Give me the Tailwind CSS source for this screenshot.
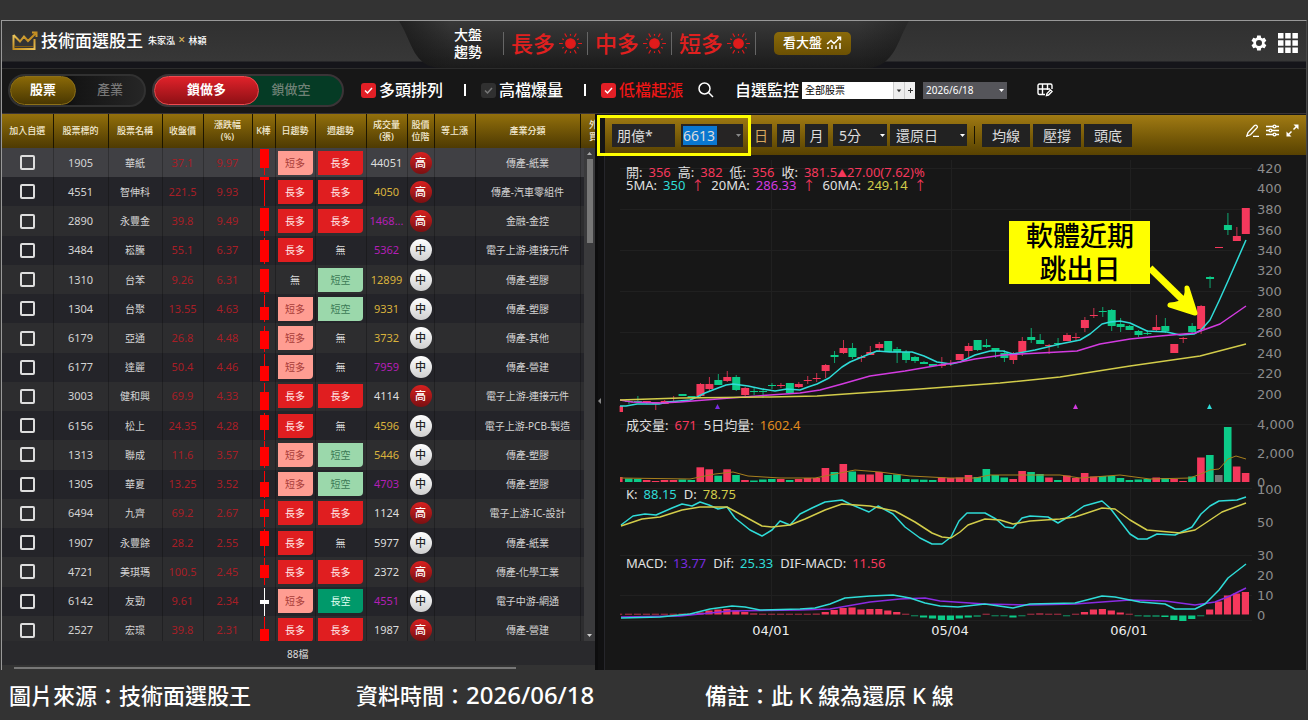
<!DOCTYPE html>
<html lang="zh-Hant">
<head>
    <meta charset="UTF-8">
    <meta name="viewport" content="width=device-width, initial-scale=1.0">
    <title>技術面選股王</title>
    <script src="https://cdn.jsdelivr.net/npm/@tailwindcss/browser@4"></script>
</head>
<body class="flex h-screen flex-col overflow-hidden bg-[#333] pt-5 font-['Noto_Sans','Noto_Sans_CJK_TC',sans-serif] text-white">
    <div class="mx-px flex min-h-0 flex-1 flex-col border-t border-r border-l border-t-[#999] border-r-[#484848] border-l-[#999] bg-[#171717]">

        <!-- Header -->
        <header class="grid h-12 shrink-0 grid-cols-[1fr_auto_1fr] border-b border-[#2c2c2c] bg-[linear-gradient(#303030,#373737_40px,#15151a_41px,#15151a)]">
            <div class="flex h-10 items-center pl-2.5">
                <svg class="h-5 w-[26px]" viewBox="0 0 26 20" fill="none" stroke-width="2">
                    <defs><linearGradient id="crown" x2="1" y2="1"><stop stop-color="#f5d36a"/><stop offset=".5" stop-color="#c08a1e"/><stop offset="1" stop-color="#f0c659"/></linearGradient></defs>
                    <path stroke="url(#crown)" d="M1.500 4V18H22.500V8M1.500 4L8 10.500 12 5.500 16 10 24 2M20 1.500H24.500V6"/>
                    <path stroke="#7d5a14" d="M3 15.500H21" stroke-width="1"/>
                </svg>
                <h1 class="ml-[3px] text-[17px] font-medium">技術面選股王</h1>
                <span class="ml-[5px] text-[9px] font-medium whitespace-nowrap">朱家泓 <span class="mx-px text-[12px] leading-3 text-[#d8b65a]">×</span> 林穎</span>
            </div>

            <!-- Market trend -->
            <div class="relative h-12 w-[510px]">
                <svg class="absolute inset-0 h-12 w-full" viewBox="0 0 510 48" preserveAspectRatio="none">
                    <defs>
                        <linearGradient id="tab" x2="0" y2="1"><stop stop-color="#383838"/><stop offset="1" stop-color="#1b1b1b"/></linearGradient>
                        <linearGradient id="tabEdge" x2="1"><stop stop-color="#111" stop-opacity=".6"/><stop offset=".1" stop-color="#111" stop-opacity="0"/><stop offset=".9" stop-color="#111" stop-opacity="0"/><stop offset="1" stop-color="#111" stop-opacity=".4"/></linearGradient>
                    </defs>
                    <path d="M0 0C14 22 14 46 42 47H470C496 44 498 20 510 0Z" fill="url(#tab)"/>
                    <path d="M0 0C14 22 14 46 42 47H470C496 44 498 20 510 0Z" fill="url(#tabEdge)"/>
                </svg>
                <div class="relative flex h-11 items-center pl-[55px]">
                    <p class="mr-[21px] w-7 text-[14px] leading-[17px] font-medium">大盤趨勢</p>
                    <div id="trends" class="flex border-r border-[#666] text-[22px] leading-[23px] font-medium text-[#e0201f]"></div>
                    <button class="ml-[18px] flex h-[23px] w-[77px] items-center justify-center gap-1 rounded-[5px] bg-linear-to-b from-[#8a6a0a] to-[#6b5003] text-[13px] font-medium">看大盤
                        <svg class="h-3.5 w-4" viewBox="0 0 16 14" fill="none" stroke="#fff" stroke-width="1.500"><path d="M1 8L5 4.500 8 7.500 14 1.500M11 1.200H14.500V4.500M2 13V11M6 13V9M10 13V9.500M14 13V7"/></svg>
                    </button>
                </div>
            </div>

            <div class="flex h-11 items-center justify-end gap-2.5 pr-2">
                <button aria-label="設定"><svg class="size-[18px]" viewBox="0 0 24 24" fill="#fff"><path fill-rule="evenodd" d="M19.400 13c.1-.3.100-.7.100-1s0-.7-.1-1l2.100-1.600c.2-.2.200-.4.100-.7l-2-3.400c-.1-.2-.4-.3-.6-.2l-2.500 1a7 7 0 0 0-1.700-1l-.4-2.600c0-.3-.2-.5-.5-.5h-4c-.3 0-.5.200-.5.500L9 5.100a7 7 0 0 0-1.700 1l-2.500-1c-.2-.1-.5 0-.6.200l-2 3.400c-.1.300 0 .5.100.7L4.500 11a8 8 0 0 0 0 2l-2.200 1.600c-.1.200-.2.400-.1.700l2 3.400c.1.200.4.300.6.200l2.500-1c.5.400 1.100.7 1.700 1l.4 2.600c0 .3.200.5.500.5h4c.3 0 .5-.2.500-.5l.4-2.600c.6-.3 1.200-.6 1.700-1l2.500 1c.2.100.5 0 .6-.2l2-3.400c.1-.3.100-.5-.1-.7zM12 16a4 4 0 1 1 0-8 4 4 0 0 1 0 8z"/></svg></button>
                <button aria-label="選單"><svg class="size-5" viewBox="0 0 20 20" fill="#fff"><path d="M0 0h5.500v5.500H0zM7.200 0h5.500v5.500H7.200zM14.400 0h5.500v5.500h-5.500zM0 7.200h5.500v5.500H0zM7.200 7.200h5.500v5.500H7.200zM14.400 7.200h5.500v5.500h-5.500zM0 14.400h5.500v5.500H0zM7.200 14.400h5.500v5.500H7.200zM14.400 14.400h5.500v5.500h-5.500z"/></svg></button>
            </div>
        </header>

        <!-- Filters -->
        <div class="flex h-11 shrink-0 items-center pb-0.5 pl-1.5 text-[16px] font-medium whitespace-nowrap">
            <div class="flex h-[33px] w-[138px] rounded-full border-2 border-[#313131] bg-linear-to-r from-black via-[#151515] to-[#262626] text-[13px]">
                <button class="w-[66px] rounded-full border border-[#8d7018] bg-linear-to-b from-[#8a6908] to-[#4a3802] font-bold">股票</button>
                <button class="flex-1 text-[#777]">產業</button>
            </div>
            <div class="ml-1.5 flex h-[33px] w-[192px] rounded-full border-2 border-[#3b3437] bg-[#053b25] text-[13px]">
                <button class="w-[105px] rounded-full border border-[#ee4a50] bg-linear-to-b from-[#e0222a] to-[#8e1015] font-bold">鎖做多</button>
                <button class="w-16 text-[#6f8176]">鎖做空</button>
            </div>

            <label class="ml-[17px] flex items-center gap-[3px]">
                <span class="grid">
                    <input type="checkbox" checked class="col-start-1 row-start-1 size-[15px] appearance-none rounded-[3px] bg-[#e21f26]">
                    <svg class="pointer-events-none col-start-1 row-start-1 size-[15px]" viewBox="0 0 15 15" fill="none" stroke="#fff" stroke-width="1.500"><path d="M4 7.500L6.500 10 11 5"/></svg>
                </span>多頭排列
            </label>
            <span class="mr-[15px] ml-[21px] h-3 w-0.5 bg-white"></span>
            <label class="flex items-center gap-[3px]">
                <span class="grid">
                    <input type="checkbox" class="col-start-1 row-start-1 size-[15px] appearance-none rounded-[3px] bg-[#303030]">
                    <svg class="pointer-events-none col-start-1 row-start-1 size-[15px]" viewBox="0 0 15 15" fill="none" stroke="#777" stroke-width="1.500"><path d="M4 7.500L6.500 10 11 5"/></svg>
                </span>高檔爆量
            </label>
            <span class="mr-[15px] ml-[21px] h-3 w-0.5 bg-white"></span>
            <label class="flex items-center gap-[3px] text-[#ee1616]">
                <span class="grid">
                    <input type="checkbox" checked class="col-start-1 row-start-1 size-[15px] appearance-none rounded-[3px] bg-[#e21f26]">
                    <svg class="pointer-events-none col-start-1 row-start-1 size-[15px]" viewBox="0 0 15 15" fill="none" stroke="#fff" stroke-width="1.500"><path d="M4 7.500L6.500 10 11 5"/></svg>
                </span>低檔起漲
            </label>
            <button class="ml-[15px]" aria-label="搜尋"><svg class="size-4" viewBox="0 0 16 16" fill="none" stroke="#fff" stroke-width="1.500"><circle cx="6.500" cy="6.500" r="5.500"/><path d="M10.500 10.500L15 15"/></svg></button>
            <label for="watch" class="ml-[21px]">自選監控</label>
            <div class="ml-[3px] flex h-[17px] w-[113px] items-center bg-white text-black">
                <select id="watch" class="h-full flex-1 appearance-none pl-[3px] text-[10px] leading-4 font-normal"><option>全部股票</option></select>
                <svg class="h-full w-[11px] border-l border-[#ccc] bg-[#eee]" viewBox="0 0 11 17"><path d="M3 7.500H8L5.500 10.500Z" fill="#333"/></svg>
                <button class="flex h-full w-[11px] items-center justify-center border-l border-[#ccc] bg-[#eee]" aria-label="新增"><svg class="size-[7px]" viewBox="0 0 7 7" stroke="#333"><path d="M3.500 1V6M1 3.500H6"/></svg></button>
            </div>
            <div class="ml-2 grid h-[17px] w-[84px] items-center bg-[#55555a]">
                <select aria-label="日期" class="col-start-1 row-start-1 h-full w-full appearance-none pl-[3px] text-[10px] leading-4 font-normal"><option>2026/6/18</option></select>
                <svg class="pointer-events-none col-start-1 row-start-1 mr-[3px] h-[3px] w-[5px] justify-self-end" viewBox="0 0 5 3" fill="#fff"><path d="M0 0H5L2.500 3Z"/></svg>
            </div>
            <button class="ml-[30px]" aria-label="編輯欄位"><svg class="size-4" viewBox="0 0 16 16" fill="none" stroke="#fff" stroke-width="1.400"><path d="M15 7V3.500Q15 2 13.500 2H2.500Q1 2 1 3.500V11Q1 12.500 2.500 12.500H8M1 7H13M5.500 2V12.500M10.500 2V8"/><path d="M9.500 13.500L10 11.500 13.500 8 15 9.500 11.500 13Z"/></svg></button>
        </div>

        <div class="flex min-h-0 flex-1 border-t border-[#3a3436]">
            <!-- Stock list -->
            <section class="flex w-[593px] shrink-0 flex-col">
                <div class="relative min-h-0 flex-1 overflow-hidden">
                    <table class="h-[531px] w-[605px] table-fixed border-collapse text-center">
                        <colgroup>
                            <col class="w-[51px]"><col class="w-[55px]"><col class="w-[54px]"><col class="w-[41px]"><col class="w-[49px]"><col class="w-[23px]"><col class="w-[40px]"><col class="w-[51px]"><col class="w-[41px]"><col class="w-[27px]"><col class="w-[41px]"><col class="w-[105px]"><col class="w-[27px]">
                        </colgroup>
                        <thead>
                            <tr id="head" class="h-[34px] bg-linear-to-b from-[#93700c] to-[#4e3a03] text-[9px] leading-3 text-[#f3ead2]"></tr>
                        </thead>
                        <tbody id="rows"></tbody>
                    </table>
                    <div class="absolute top-[34px] right-0 bottom-0 flex w-[11px] flex-col items-center justify-between bg-[#3a3a3c]">
                        <svg class="my-1 h-[3px] w-[5px]" viewBox="0 0 5 3" fill="#aaa"><path d="M0 3H5L2.500 0Z"/></svg>
                        <div class="mb-auto h-[84px] w-1.5 bg-[#777]"></div>
                        <svg class="my-1 h-[3px] w-[5px]" viewBox="0 0 5 3" fill="#ccc"><path d="M0 0H5L2.500 3Z"/></svg>
                    </div>
                </div>
                <div class="flex h-6 shrink-0 items-center bg-[#29292c] pt-0.5 pl-[285px] text-[10px] text-[#ddd]">88檔</div>
                <div class="flex h-[5px] shrink-0 items-center bg-[#333] px-3"><div class="h-0.5 w-[502px] bg-[#777]"></div></div>
            </section>

            <div class="w-[3px] shrink-0 bg-[#0d0d0e]"></div>

            <!-- Chart -->
            <section class="flex min-w-0 flex-1 flex-col">
                <div class="relative mt-px flex h-10 shrink-0 items-center bg-linear-to-b from-[#a17b13] to-[#584202] pl-0.5 text-[14px] text-[#ddd]">
                    <div class="h-9 w-[5px] bg-[#141414]"></div>
                    <div class="ml-[7px] flex gap-1.5">
                        <input aria-label="股票名稱" value="朋億*" class="h-[23px] w-[63px] bg-[#262424] pl-[5px]">
                        <div class="flex h-[23px] w-[62px] items-center justify-between bg-[#262424] px-0.5">
                            <input aria-label="股票代號" value="6613" class="h-[19px] w-[34px] bg-[#0a78d0] text-[14px]">
                            <svg class="h-[3px] w-[5px]" viewBox="0 0 5 3" fill="#888"><path d="M0 0H5L2.500 3Z"/></svg>
                        </div>
                    </div>
                    <div class="ml-[7px] flex gap-[5px]">
                        <button class="h-[23px] w-[22px] bg-[#2a2520] text-[#d9a860]">日</button>
                        <button class="h-[23px] w-[23px] bg-[#222]">周</button>
                        <button class="h-[23px] w-[23px] bg-[#222]">月</button>
                    </div>
                    <div class="ml-[5px] flex gap-[3px]">
                        <div class="grid h-[22px] w-[54px] items-center bg-[#222]">
                            <select aria-label="分線" class="col-start-1 row-start-1 w-full appearance-none pl-1.5"><option>5分</option></select>
                            <svg class="pointer-events-none col-start-1 row-start-1 mr-0.5 h-[3px] w-[5px] justify-self-end" viewBox="0 0 5 3" fill="#fff"><path d="M0 0H5L2.500 3Z"/></svg>
                        </div>
                        <div class="grid h-[22px] w-[77px] items-center bg-[#222]">
                            <select aria-label="還原" class="col-start-1 row-start-1 w-full appearance-none pl-1.5"><option>還原日</option></select>
                            <svg class="pointer-events-none col-start-1 row-start-1 mr-0.5 h-[3px] w-[5px] justify-self-end" viewBox="0 0 5 3" fill="#fff"><path d="M0 0H5L2.500 3Z"/></svg>
                        </div>
                    </div>
                    <div class="mx-[7px] h-[18px] w-px bg-[#1a1400]"></div>
                    <div class="flex gap-[3px]">
                        <button class="h-[23px] w-12 bg-[#222]">均線</button>
                        <button class="h-[23px] w-12 bg-[#222]">壓撐</button>
                        <button class="h-[23px] w-12 bg-[#222]">頭底</button>
                    </div>
                    <div class="mb-2.5 ml-auto flex gap-[7px] pr-[7px]">
                        <button aria-label="畫線"><svg class="size-[13px]" viewBox="0 0 13 13" fill="none" stroke="#fff" stroke-width="1.300"><path d="M.8 12L2 8.500 8.500 1.500Q10 .5 11 1.800T10.800 4L4.500 10.800ZM7 12.300H13"/></svg></button>
                        <button aria-label="參數"><svg class="size-[13px]" viewBox="0 0 13 13" fill="none" stroke="#fff" stroke-width="1.300"><path d="M0 2.500H7M10 2.500H13M0 6.500H3M6 6.500H13M0 10.500H7M10 10.500H13"/><circle cx="8.500" cy="2.500" r="1.400"/><circle cx="4.500" cy="6.500" r="1.400"/><circle cx="8.500" cy="10.500" r="1.400"/></svg></button>
                        <button aria-label="全螢幕"><svg class="size-[13px]" viewBox="0 0 13 13" fill="#fff" stroke="#fff" stroke-width="1.500"><path d="M2 11L5.500 7.500M7.500 5.500L11 2"/><path stroke="none" d="M7.500 .5H12.500V5.500ZM.5 7.500V12.500H5.500Z"/></svg></button>
                    </div>
                    <div class="pointer-events-none absolute top-0 -left-px h-[41px] w-[154px] border-3 border-[#ffff00]"></div>
                </div>
                <svg id="chart" class="mt-px w-full" viewBox="598 156 708 514"></svg>
            </section>
        </div>
    </div>

    <!-- Caption -->
    <footer class="flex h-[50px] shrink-0 items-center pl-[9px] text-[22px] font-medium whitespace-nowrap">
        <p class="w-[347px]">圖片來源：技術面選股王</p>
        <p class="w-[349px]">資料時間：<span class="text-[24px]">2026/06/18</span></p>
        <p>備註：此 K 線為還原 K 線</p>
    </footer>

    <script>
        // Market trend with sun icons
        const rays = Array.from({ length: 12 }, (_, i) => {
            const a = i * Math.PI / 6, r = i % 2 ? 10 : 12;
            return `M${12 + 8 * Math.cos(a)} ${12 + 8 * Math.sin(a)}L${12 + r * Math.cos(a)} ${12 + r * Math.sin(a)}`;
        }).join('');
        document.getElementById('trends').innerHTML = ['長多', '中多', '短多'].map(t => `
            <div class="flex w-[84px] items-center gap-1 border-l border-[#666] pl-[7px]">${t}
                <svg class="size-[23px] shrink-0" viewBox="0 0 24 24" fill="#e01b1b" stroke="#e01b1b" stroke-width="1.200"><circle cx="12" cy="12" r="5"/><path d="${rays}"/></svg>
            </div>`).join('');

        const headers = ['加入自選', '股票標的', '股票名稱', '收盤價', '漲跌幅<br>(%)', 'K棒', '日趨勢', '週趨勢', '成交量<br>(張)', '股價<br>位階', '等上漲', '產業分類', '外<br>買'];
        document.getElementById('head').innerHTML = headers.map(h => `<th class="border-r border-[#1d1600] p-0 font-medium whitespace-nowrap">${h}</th>`).join('');

        // code, name, close, change %, candle [top, bottom, high, low], daily, weekly, volume, volume level, position, sector
        const stocks = [
            ['1905', '華紙', '37.1', '9.97', [1, 20, 1, 27], '短多', '長多', '44051', 'w', '高', '傳產-紙業'],
            ['4551', '智伸科', '221.5', '9.93', [0, 3, 0, 29], '長多', '長多', '4050', 'y', '高', '傳產-汽車零組件'],
            ['2890', '永豐金', '39.8', '9.49', [1, 24, 1, 29], '長多', '長多', '1468...', 'p', '高', '金融-金控'],
            ['3484', '崧騰', '55.1', '6.37', [4, 26, 2, 28], '長多', '無', '5362', 'p', '中', '電子上游-連接元件'],
            ['1310', '台苯', '9.26', '6.31', [4, 27, 4, 29], '無', '短空', '12899', 'y', '中', '傳產-塑膠'],
            ['1304', '台聚', '13.55', '4.63', [13, 26, 1, 28], '短多', '短空', '9331', 'y', '中', '傳產-塑膠'],
            ['6179', '亞通', '26.8', '4.48', [7, 25, 2, 28], '短多', '無', '3732', 'y', '中', '傳產-其他'],
            ['6177', '達麗', '50.4', '4.46', [13, 28, 1, 28], '短多', '無', '7959', 'p', '中', '傳產-營建'],
            ['3003', '健和興', '69.9', '4.33', [10, 28, 1, 28], '長多', '長多', '4114', 'w', '高', '電子上游-連接元件'],
            ['6156', '松上', '24.35', '4.28', [4, 19, 2, 29], '長多', '無', '4596', 'y', '中', '電子上游-PCB-製造'],
            ['1313', '聯成', '11.6', '3.57', [7, 26, 1, 28], '短多', '短空', '5446', 'y', '中', '傳產-塑膠'],
            ['1305', '華夏', '13.25', '3.52', [12, 27, 1, 28], '短多', '短空', '4703', 'p', '中', '傳產-塑膠'],
            ['6494', '九齊', '69.2', '2.67', [10, 18, 1, 28], '長多', '長多', '1124', 'w', '高', '電子上游-IC-設計'],
            ['1907', '永豐餘', '28.2', '2.55', [3, 18, 1, 28], '長多', '無', '5977', 'w', '中', '傳產-紙業'],
            ['4721', '美琪瑪', '100.5', '2.45', [8, 21, 1, 28], '長多', '長多', '2372', 'w', '高', '傳產-化學工業'],
            ['6142', '友勁', '9.61', '2.34', [13, 17, 1, 29], '短多', '長空', '4551', 'p', '中', '電子中游-網通'],
            ['2527', '宏璟', '39.8', '2.31', [13, 29, 1, 29], '長多', '長多', '1987', 'w', '高', '傳產-營建']
        ];
        const badge = {
            '長多': 'bg-[#e01e20] text-[#ffe9e9]',
            '短多': 'bg-[#ff9d92] text-[#a83c38]',
            '短空': 'bg-[#9bd8ab] text-[#3c7a55]',
            '長空': 'bg-[#00996a] text-[#e0fff2]',
            '無': 'text-[#ddd]'
        };
        const volumeColor = { w: 'text-[#ddd]', y: 'text-[#d9b23c]', p: 'text-[#b31fb5]' };
        const position = {
            '高': 'bg-linear-to-b from-[#d8201f] to-[#7a1012] text-white',
            '中': 'bg-linear-to-b from-white to-[#cfcfcf] text-[#222]'
        };
        const td = 'border-r border-black/25 p-0';
        document.getElementById('rows').innerHTML = stocks.map(([code, name, price, change, k, day, week, vol, level, pos, sector], i) => {
            const bg = i === 0 ? 'bg-[#404044]' : i % 2 ? 'bg-[#242429]' : 'bg-[#2d2d2f]';
            const color = code === '6142' ? '#fff' : '#ff0000';
            return `
            <tr class="${bg} text-[11px] leading-4 whitespace-nowrap text-[#d4d4d4]">
                <td class="${td}"><input type="checkbox" aria-label="加入自選 ${name}" class="mx-auto block size-[15px] appearance-none rounded-[2px] border-2 border-[#ddd]"></td>
                <td class="${td}">${code}</td>
                <td class="${td} text-[10px]">${name}</td>
                <td class="${td} text-[#a81e26]">${price}</td>
                <td class="${td} text-[#a81e26]">${change}</td>
                <td class="${td}"><svg class="mx-auto block h-[29px] w-2.5" viewBox="0 0 10 29" fill="${color}"><path d="M5 ${k[2]}H6V${k[3]}H5ZM1 ${k[0]}H10V${k[1]}H1Z"/></svg></td>
                <td class="${td}"><span class="mx-auto block h-6 w-[35px] rounded-br-[4px] text-[10px] leading-6 ${badge[day]}">${day}</span></td>
                <td class="${td}"><span class="mx-auto block h-6 w-[45px] rounded-br-[4px] text-[10px] leading-6 ${badge[week]}">${week}</span></td>
                <td class="${td} ${volumeColor[level]}">${vol}</td>
                <td class="${td}"><span class="mx-auto block size-[22px] rounded-full text-[11px] leading-[21px] font-medium ${position[pos]}">${pos}</span></td>
                <td class="${td}"></td>
                <td class="${td} text-[10px]">${sector}</td>
                <td></td>
            </tr>`;
        }).join('');

        // Chart
        const RED = '#f5385c', GREEN = '#0ccb88', CYAN = '#2fdcd8', MAGENTA = '#d33be0', YELLOW = '#d2cc4a';
        const x = i => 620 + i * 8.94;

        // color, open/close top, bottom, high, low
        const candles = [
            'r 406 412 406 412', 'g 401 402 400 404', 'g 401 402 396 403', 'r 401 403 401 404', 'r 402 404 402 410', 'r 401 404 400 404', 'r 401 402 396 402', 'g 394 396 394 396', 'g 396 398 396 398', 'r 384 396 383 397',
            'r 384 389 377 392', 'g 380 385 374 385', 'r 377 381 371 382', 'g 377 390 375 391', 'r 388 395 387 396', 'g 391 392 388 395', 'g 391 392 388 398', 'g 385 386 383 389', 'r 385 386 383 388', 'g 383 393 383 393',
            'r 384 387 382 388', 'r 380 381 376 384', 'r 378 379 373 382', 'r 365 371 364 378', 'g 355 357 351 363', 'r 348 353 340 354', 'g 348 357 343 359', 'r 357 358 355 362', 'r 352 355 346 355', 'r 344 348 342 352',
            'g 341 352 341 352', 'g 349 352 347 363', 'g 352 360 350 363', 'g 357 361 356 363', 'g 362 364 361 364', 'g 364 366 364 366', 'r 365 366 357 368', 'r 363 364 360 366', 'r 354 360 354 360', 'r 346 351 343 357',
            'g 340 350 340 351', 'g 345 347 339 348', 'g 348 351 348 358', 'g 353 358 350 362', 'r 355 360 352 364', 'r 341 352 337 356', 'g 337 340 328 343', 'g 340 344 334 344', 'r 345 346 344 354', 'g 343 344 338 348',
            'r 335 341 333 341', 'r 337 338 333 340', 'r 320 328 317 332', 'r 315 316 308 318', 'g 311 312 307 317', 'g 310 326 309 331', 'g 324 327 318 332', 'g 326 330 325 330', 'g 331 335 330 337', 'g 333 334 330 335',
            'r 327 330 315 332', 'g 326 331 318 333', 'r 344 353 344 353', 'r 338 339 337 343', 'g 326 332 323 333', 'r 306 329 305 334', 'g 277 279 276 288', 'r 247 248 247 248', 'g 225 230 213 235', 'r 236 241 227 241', 'r 208 234 208 234'
        ].map(s => s.split(' '));
        const volumes = [5, 3.5, 3, 2, 1, 2, 2, 2.5, 2, 14.7, 12.7, 6.3, 12.7, 7, 2, 1.5, 2.5, 3, 3, 2, 3, 4, 4, 14, 10, 18, 10.5, 7.5, 7.5, 10, 7, 7.5, 3, 2.7, 2.3, 2, 4.5, 4, 4.5, 7, 5, 13, 7, 4.5, 3, 11, 10, 8, 4.5, 2, 6.5, 4, 9, 5.5, 6, 6, 4, 2, 2.5, 3, 4.5, 4, 3, 1, 5.5, 24.5, 27, 7, 55, 15.5, 9];
        const histogram = [.7, .7, .7, .7, .7, .7, .7, .8, 1, 2, 4, 5, 5.5, 4, 2.5, 1, .7, .7, .7, .7, .7, .7, .8, 2.5, 4.5, 6.5, 7, 5, 5.5, 5.5, 4, 2.5, .7, -.7, -2, -3, -4.5, -4.5, -3, -2, -1, .7, -.7, -.7, -2, -.7, .7, 1, .7, .7, -.7, .7, 2.5, 5, 5.5, 4, 2, .7, -.7, -1, -1, -1.5, -4.5, -5.5, -3.5, -.7, 5, 13, 19, 21, 22.5];

        const lines = [
            [CYAN, '620,406 626,406 637,404 659,404 668,402 690,400 697,397 705,393 718,388 726,385 733,384 748,386 762,389 775,391 787,389 800,390 808,387 817,384 829,378 842,367 850,362 862,357 877,351 890,352 912,352 924,356 937,362 951,364 960,362 975,355 990,351 1003,351 1013,354 1035,350 1060,344 1080,340 1090,334 1102,324 1110,322 1120,321 1130,323 1147,331 1167,332 1180,335 1194,334 1201,330 1210,320 1219,301 1228,281 1246,240'],
            [MAGENTA, '620,400 632,402 660,403 680,402 705,400 730,398 770,395 800,393 820,390 842,384 870,376 905,371 940,365 960,362 975,359 1003,355 1040,353 1077,351 1100,344 1130,339 1160,336 1195,333 1220,324 1246,306'],
            [YELLOW, '620,400 680,398 770,397 817,396 860,393 920,389 960,386 1000,383 1060,377 1130,366 1200,356 1246,344'],
            [CYAN, '621,525 633,516 645,514 656,515 672,508 682,504 692,506 700,502 709,505 718,509 727,507 735,518 750,530 762,536 772,530 780,521 790,525 800,514 812,508 825,502 842,500 850,504 869,512 878,506 893,514 905,527 920,538 932,544 942,544 951,537 959,521 967,513 985,513 996,519 1005,527 1013,528 1022,518 1030,516 1048,517 1058,523 1068,517 1084,506 1102,501 1110,508 1130,534 1138,539 1147,539 1157,534 1175,535 1192,527 1201,514 1210,506 1219,501 1237,500 1246,497'],
            [YELLOW, '621,526 642,519 660,517 682,510 700,507 727,507 740,514 762,526 772,527 790,525 805,519 825,510 842,504 870,506 895,511 915,522 932,533 942,537 951,538 960,532 968,525 985,519 1000,520 1013,524 1030,521 1060,519 1075,517 1102,508 1115,509 1130,520 1147,530 1180,533 1195,530 1222,512 1246,503'],
            ['#8a2be2', '621,617 680,616 730,611 800,610 830,609 870,602 900,599 925,598 940,601 985,604 1030,605 1075,604 1102,602 1130,600 1165,601 1195,605 1215,602 1230,596 1246,588'],
            [CYAN, '621,618 660,617 690,614 710,609 732,606 745,607 760,610 800,609 815,608 830,604 845,598 870,596 893,595 910,598 925,603 940,606 958,607 985,604 1013,608 1030,604 1075,603 1102,596 1115,597 1140,602 1165,604 1175,609 1195,609 1205,604 1219,590 1228,578 1246,564']
        ];

        let out = '<rect x="598" y="156" width="6" height="514" fill="#111112"/><path d="M604.500 156V670" stroke="#26262b"/>';
        out += '<path d="M601 398L598 401 601 404Z" fill="#888"/>';
        out += '<path stroke="#202020" fill="none" d="M771.500 160V620M951.500 160V620M1130.500 160V620M620 168.500H1252M620 209.500H1252M620 250.500H1252M620 291.500H1252M620 332.500H1252M620 373.500H1252M620 424.500H1252M620 488.500H1252M620 555.500H1252M620 595.500H1252M620 620.500H1252"/>';

        candles.forEach(([c, top, bottom, high, low], i) => {
            const color = c === 'r' ? RED : GREEN;
            const left = i ? x(i) - 4 : 620;
            const w = i ? 8 : 3;
            out += `<path d="M${x(i)} ${high}V${low}" stroke="${color}" stroke-width=".8"/>`;
            out += `<rect x="${left}" y="${top}" width="${w}" height="${bottom - top}" fill="${color}"/>`;
            out += `<rect x="${left}" y="${482 - volumes[i]}" width="${w - .4}" height="${volumes[i]}" fill="${i === 67 ? '#777' : color}"/>`;
            const h = histogram[i];
            out += `<rect x="${left}" y="${h > 0 ? 614.500 - h : 615.500}" width="${w - .8}" height="${Math.abs(h)}" fill="${h > 0 ? RED : GREEN}"/>`;
        });
        out += '<polyline fill="none" stroke="#a8801e" points="620,478 690,479 715,474 733,472 748,476 780,478 815,478 840,473 855,470 880,472 910,476 950,478 975,478 990,475 1010,475 1060,475 1080,478 1120,475 1150,479 1190,478 1203,473 1210,470 1219,469 1228,459 1236,456 1246,459"/>';
        lines.forEach(([c, p]) => out += `<polyline fill="none" stroke="${c}" stroke-width="1.500" stroke-linejoin="round" points="${p}"/>`);
        out += `<path d="M717.500 404L720 409H715Z" fill="#7a2be0"/><path d="M1075.500 404L1078 409H1073Z" fill="${MAGENTA}"/><path d="M1209.500 404L1212 409H1207Z" fill="${CYAN}"/>`;

        // Axis labels
        const axis = [[420, 168], [400, 188], [380, 209], [360, 230], [340, 250], [320, 270], [300, 291], [280, 312], [260, 332], [240, 353], [220, 373], [200, 394], ['4,000', 424], ['2,000', 453], [0, 482], [100, 489], [50, 522], [30, 555], [20, 575], [10, 595], [0, 615]];
        axis.forEach(([t, y]) => out += `<text x="1257" y="${y + 5}" fill="#8c8c8c" class="font-['DejaVu_Sans'] text-[13px]">${t}</text>`);
        [['04/01', 771], ['05/04', 950], ['06/01', 1129]].forEach(([t, px]) => out += `<text x="${px}" y="635" text-anchor="middle" fill="#eee" class="font-['DejaVu_Sans'] text-[13px]">${t}</text>`);

        // Legends: label / value pairs
        const legends = [
            [177, [['開:', '356', RED], ['高:', '382', RED], ['低:', '356', RED], ['收:', '381.5<tspan class="text-[10px]">▲</tspan>27.00(7.62)%', RED]]],
            [190, [['5MA:', '350', CYAN], ['', '↑', RED], ['20MA:', '286.33', MAGENTA], ['', '↑', RED], ['60MA:', '249.14', YELLOW], ['', '↑', RED]]],
            [430, [['成交量:', '671', RED], ['5日均量:', '1602.4', '#e08a1e']]],
            [499, [['K:', '88.15', CYAN], ['D:', '78.75', YELLOW]]],
            [568, [['MACD:', '13.77', '#7a2be0'], ['Dif:', '25.33', CYAN], ['DIF-MACD:', '11.56', RED]]]
        ];
        legends.forEach(([y, items]) => {
            out += `<text x="626" y="${y}" class="text-[13px]">`;
            items.forEach(([label, value, color], i) => {
                if (label) out += `<tspan fill="#e0e0e0" dx="${i ? 7 : 0}">${label}</tspan>`;
                out += `<tspan fill="${color}" dx="6">${value}</tspan>`;
            });
            out += '</text>';
        });

        // Callout
        out += '<rect x="1009" y="221" width="141" height="63" fill="#ffff00"/>';
        out += '<g text-anchor="middle" fill="#000" class="text-[27px] font-medium"><text x="1080" y="246">軟體近期</text><text x="1080" y="279">跳出日</text></g>';
        out += '<path d="M1150 268L1188 305" stroke="#ffff00" stroke-width="7"/><path d="M1187 288L1195 313 1170 305Q1182 304 1182 300 1188 298 1187 288Z" fill="#ffff00" stroke="#ffff00" stroke-width="5" stroke-linecap="round" stroke-linejoin="round"/>';
        document.getElementById('chart').innerHTML = out;
    </script>
</body>
</html>
